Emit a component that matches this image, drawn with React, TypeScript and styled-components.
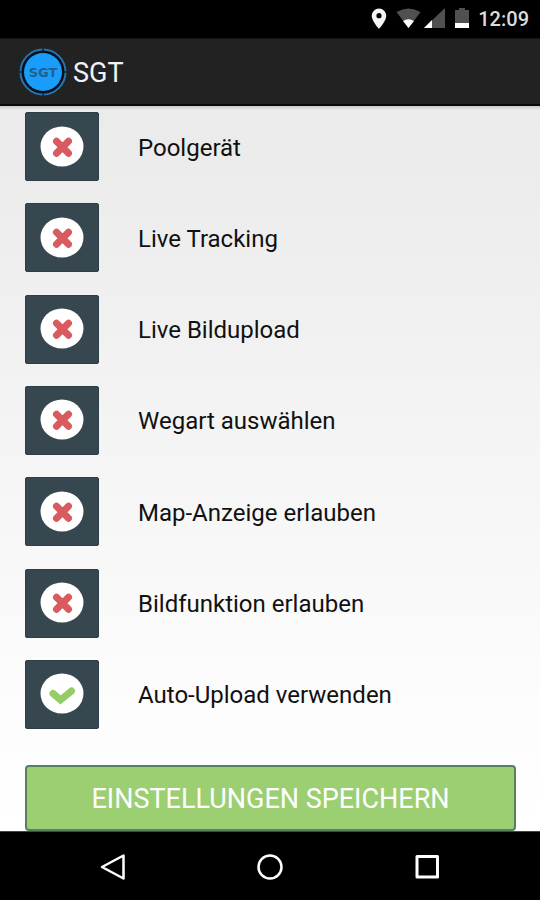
import React, { useState } from "react";
import styled, { createGlobalStyle } from "styled-components";

const GlobalStyle = createGlobalStyle`
  *, *::before, *::after { box-sizing: border-box; }
  body { margin: 0; background: #000; font-family: Roboto, "Noto Sans", sans-serif; }
`;

const Screen = styled.div`
  display: flex;
  flex-direction: column;
  min-height: 100vh;
`;

const StatusBar = styled.div`
  display: flex;
  align-items: center;
  justify-content: flex-end;
  height: 38px;
  padding-right: 11px;
  background: #000;
`;

const StatusIcons = styled.svg`
  display: block;
  width: 100px;
  height: 22px;
  margin-right: 8px;
`;

const Clock = styled.time`
  color: #dcdcdc;
  font-size: 20px;
  font-weight: 500;
  line-height: 38px;
`;

const AppBar = styled.header`
  display: flex;
  align-items: center;
  gap: 6px;
  height: 68px;
  padding-left: 19px;
  background: #222;
  border-top: 1px solid #161616;
  border-bottom: 2px solid #0a0a0a;
`;

const Logo = styled.svg`
  display: block;
  width: 48px;
  height: 48px;
`;

const Title = styled.h1`
  margin: 0;
  padding-top: 2px;
  color: #f2f2f2;
  font-size: 27px;
  font-weight: 400;
  line-height: 32px;
`;

const Settings = styled.form`
  display: flex;
  flex: 1;
  flex-direction: column;
  gap: 36px;
  padding: 6px 24px 0 25px;
  background: linear-gradient(#c8c8c8 0, #ebebeb 4px, #ececec 10%, #f3f3f3 40%, #fdfdfd 85%, #fff);
  border-bottom: 1px solid #3c4b45;
`;

const OptionList = styled.ul`
  display: flex;
  flex: 1;
  flex-direction: column;
  justify-content: space-between;
  margin: 0;
  padding: 0;
  list-style: none;
`;

const Option = styled.label`
  display: flex;
  align-items: center;
  gap: 39px;
  cursor: pointer;
`;

const Tile = styled.span`
  position: relative;
  display: grid;
  place-items: center;
  width: 74px;
  height: 69px;
  background: #37474f;
  border: 1px solid #2d3e47;
  border-radius: 2px;
`;

const Check = styled.input`
  position: absolute;
  inset: 0;
  width: 100%;
  height: 100%;
  margin: 0;
  opacity: 0;
  cursor: pointer;
`;

const Mark = styled.svg`
  display: block;
  width: 44px;
  height: 42px;
`;

const OptionText = styled.span`
  padding-top: 2px;
  color: #111;
  font-size: 24px;
  line-height: 28px;
`;

const SaveButton = styled.button`
  height: 66px;
  padding: 2px 0 0;
  color: #fff;
  background: #9ccf72;
  border: 2px solid #56805f;
  border-radius: 4px;
  font-family: inherit;
  font-size: 27px;
  line-height: 32px;
  cursor: pointer;
`;

const NavBar = styled.nav`
  display: flex;
  height: 68px;
  padding: 0 35px;
  background: #000;
`;

const NavButton = styled.button`
  display: grid;
  flex: 1;
  place-items: center;
  padding: 2px 0 0;
  background: none;
  border: 0;
  cursor: pointer;
`;

const NavIcon = styled.svg`
  display: block;
  width: 28px;
  height: 28px;
  fill: none;
  stroke: #fff;
  stroke-width: 3;
  stroke-linejoin: round;
`;

const options = [
  { label: "Poolgerät", on: false },
  { label: "Live Tracking", on: false },
  { label: "Live Bildupload", on: false },
  { label: "Wegart auswählen", on: false },
  { label: "Map-Anzeige erlauben", on: false },
  { label: "Bildfunktion erlauben", on: false },
  { label: "Auto-Upload verwenden", on: true },
];

function Toggle({ label, on }: { label: string; on: boolean }) {
  const [checked, setChecked] = useState(on);
  return (
    <Option>
      <Tile>
        <Mark viewBox="0 0 44 42" aria-hidden="true">
          <ellipse cx="22" cy="20.5" rx="21.5" ry="20" fill="#fff" />
          {checked ? (
            <path d="M13 20.500l7.500 6.500L31.500 18" fill="none" stroke="#94cc67" strokeWidth="7" strokeLinecap="round" strokeLinejoin="miter" />
          ) : (
            <path d="M16.500 15.200l12 12M28.500 15.200l-12 12" fill="none" stroke="#d95b5f" strokeWidth="7" strokeLinecap="round" />
          )}
        </Mark>
        <Check type="checkbox" checked={checked} onChange={(e) => setChecked(e.target.checked)} />
      </Tile>
      <OptionText>{label}</OptionText>
    </Option>
  );
}

export default function App() {
  return (
    <>
      <GlobalStyle />
      <Screen>
        <StatusBar>
          <StatusIcons viewBox="0 0 100 22" aria-hidden="true">
            <path d="M9 .5A7.3 7.3 0 0 0 1.700 7.800C1.700 13 9 21 9 21s7.300-8 7.300-13.200A7.300 7.300 0 0 0 9 .5zm0 4.600a2.600 2.600 0 1 1 0 5.200 2.600 2.600 0 0 1 0-5.200z" fill="#f4f4f4" fillRule="evenodd" />
            <path d="M26.500 4Q38.500-3 50.500 4L38.500 20z" fill="#505050" />
            <path d="M33 13Q38.500 9.500 44 13L38.500 20z" fill="#fff" />
            <path d="M54 20L75 0V20z" fill="#505050" />
            <path d="M54 20l8-8v8z" fill="#fff" />
            <path d="M85 2h4V0h6v2h4v18H85z" fill="#505050" />
            <path d="M85 15h14v5H85z" fill="#fff" />
          </StatusIcons>
          <Clock>12:09</Clock>
        </StatusBar>
        <AppBar>
          <Logo viewBox="0 0 48 48" role="img" aria-label="SGT Logo">
            <circle cx="24" cy="24" r="22.500" fill="#06101a" stroke="#2376b4" strokeWidth="2" />
            <path d="M24 0v3M24 45v3M0 24h3M45 24h3" stroke="#222" strokeWidth="1.500" />
            <circle cx="24" cy="24" r="19" fill="#1a9cfa" />
            <text x="24" y="28.500" textAnchor="middle" fontFamily="DejaVu Sans, sans-serif" fontWeight="700" fontSize="13" fill="#20608f">SGT</text>
          </Logo>
          <Title>SGT</Title>
        </AppBar>
        <Settings onSubmit={(e) => e.preventDefault()}>
          <OptionList>
            {options.map((o) => (
              <li key={o.label}>
                <Toggle label={o.label} on={o.on} />
              </li>
            ))}
          </OptionList>
          <SaveButton type="submit">EINSTELLUNGEN SPEICHERN</SaveButton>
        </Settings>
        <NavBar>
          <NavButton type="button" aria-label="Zurück">
            <NavIcon viewBox="0 0 28 28"><path d="M3 14L24.500 2.500V25.500z" strokeWidth="2.500" /></NavIcon>
          </NavButton>
          <NavButton type="button" aria-label="Startseite">
            <NavIcon viewBox="0 0 28 28"><circle cx="14" cy="14" r="11.500" strokeWidth="2.500" /></NavIcon>
          </NavButton>
          <NavButton type="button" aria-label="Letzte Apps">
            <NavIcon viewBox="0 0 28 28"><rect x="4" y="3.500" width="20.500" height="20.500" /></NavIcon>
          </NavButton>
        </NavBar>
      </Screen>
    </>
  );
}
